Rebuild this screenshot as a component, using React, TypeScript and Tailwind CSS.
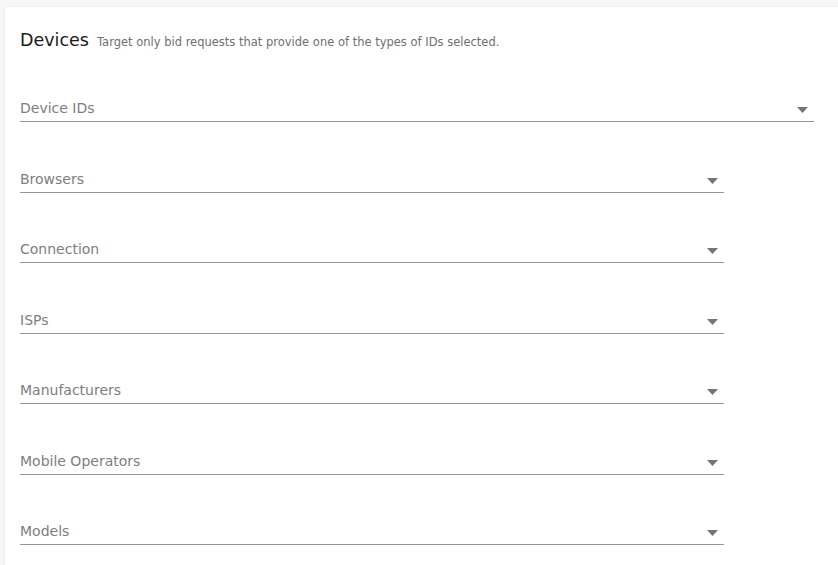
import React from 'react';

const fields = [
  { label: 'Device IDs', wide: true },
  { label: 'Browsers' },
  { label: 'Connection' },
  { label: 'ISPs' },
  { label: 'Manufacturers' },
  { label: 'Mobile Operators' },
  { label: 'Models' },
];

function Caret() {
  return (
    <svg width="11" height="6" viewBox="0 0 11 6" className="mt-[4px] shrink-0">
      <path d="M0 0 H11 L5.5 6 Z" fill="#757575" />
    </svg>
  );
}

function SelectField({ label, wide }: { label: string; wide?: boolean }) {
  return (
    <div
      className={`mt-[34.5px] h-[36px] flex items-end border-b border-[#949494] pb-[3px] pr-[6px] ${
        wide ? 'w-[794px]' : 'w-[704px]'
      }`}
    >
      <div className="flex w-full items-center justify-between">
        <span className="text-[14px] leading-[20px] text-[#7e7e7e]">{label}</span>
        <Caret />
      </div>
    </div>
  );
}

export default function App() {
  return (
    <div
      className="min-h-[565px] bg-[#f7f7f7] pt-[7px] pl-[5px] overflow-hidden"
      style={{ fontFamily: '"DejaVu Sans", "Open Sans", sans-serif' }}
    >
      <div className="bg-white min-h-[570px] pl-[15px] pt-[21px] shadow-[0_0_3px_rgba(0,0,0,0.08)]">
        <div className="flex items-baseline gap-[8px] h-[24px]">
          <h2 className="text-[17.5px] leading-[24px] font-medium text-[#1a1a1a]">Devices</h2>
          <p className="text-[11.5px] text-[#707070]">
            Target only bid requests that provide one of the types of IDs selected.
          </p>
        </div>
        <div className="flex flex-col -mt-[0.5px]">
          {fields.map((f) => (
            <SelectField key={f.label} label={f.label} wide={f.wide} />
          ))}
        </div>
      </div>
    </div>
  );
}
